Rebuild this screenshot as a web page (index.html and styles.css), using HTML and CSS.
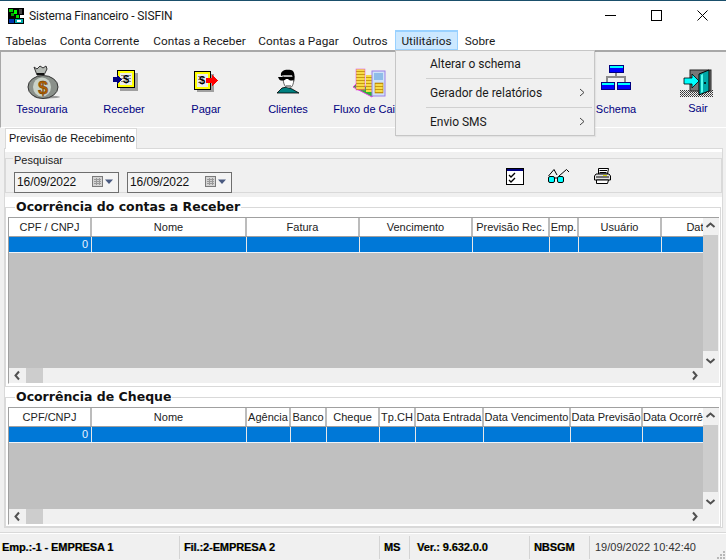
FILE: index.html
```html
<!DOCTYPE html>
<html lang="pt-BR">
<head>
<meta charset="utf-8">
<title>Sistema Financeiro - SISFIN</title>
<link rel="stylesheet" href="styles.css">
</head>
<body>
<div class="app">
  <header class="titlebar">
    <svg class="appicon" width="16" height="16" viewBox="0 0 16 16" shape-rendering="crispEdges"><rect width="16" height="16" fill="#000"/><rect x="1" y="1" width="4" height="3" fill="#0c0"/><rect x="6" y="2" width="3" height="4" fill="#0f0"/><rect x="3" y="5" width="3" height="3" fill="#0a0"/><rect x="11" y="1" width="3" height="5" fill="#444"/><rect x="8" y="7" width="3" height="3" fill="#0d0"/><rect x="1" y="11" width="5" height="4" fill="#03a"/><rect x="7" y="11" width="8" height="4" fill="#0aa"/><rect x="12" y="7" width="4" height="3" fill="#fff"/><rect x="9" y="12" width="4" height="2" fill="#fff"/></svg>
    <span class="title">Sistema Financeiro - SISFIN</span>
    <div class="winctl">
      <svg width="11" height="11" viewBox="0 0 11 11"><path d="M0 5.5H11" stroke="#000"/></svg>
      <svg width="11" height="11" viewBox="0 0 11 11"><rect x=".5" y=".5" width="10" height="10" fill="none" stroke="#000"/></svg>
      <svg width="11" height="11" viewBox="0 0 11 11"><path d="M.5 .5L10.500 10.500M10.500 .5L.5 10.500" stroke="#000"/></svg>
    </div>
  </header>
  <nav class="menubar">
    <span class="menu">Tabelas</span>
    <span class="menu">Conta Corrente</span>
    <span class="menu">Contas a Receber</span>
    <span class="menu">Contas a Pagar</span>
    <span class="menu">Outros</span>
    <span class="menu active">Utilitários</span>
    <span class="menu">Sobre</span>
  </nav>
  <div class="dropdown">
    <div class="dd-item">Alterar o schema</div>
    <div class="dd-sep"></div>
    <div class="dd-item">Gerador de relatórios<svg class="dd-arrow" width="6" height="9" viewBox="0 0 6 9"><path d="M1 1L5 4.500L1 8" fill="none" stroke="#444"/></svg></div>
    <div class="dd-sep"></div>
    <div class="dd-item">Envio SMS<svg class="dd-arrow" width="6" height="9" viewBox="0 0 6 9"><path d="M1 1L5 4.500L1 8" fill="none" stroke="#444"/></svg></div>
  </div>
  <div class="toolbar">
    <div class="tool">
      <svg width="40" height="40" viewBox="0 0 40 40"><ellipse cx="25" cy="37" rx="13" ry="1.500" fill="#9a9a9a"/><path d="M12 7L15 9L18 6L21 8L24 6L25 9L22 15H15Z" fill="#b5bab5" stroke="#333"/><path d="M15 14H22" stroke="#111" stroke-width="2"/><ellipse cx="21" cy="27" rx="15" ry="11.500" fill="#8a908a" stroke="#333"/><ellipse cx="20" cy="27" rx="9" ry="9.500" fill="#c9d2c9"/><text class="dollar-big" x="21" y="34">$</text></svg>
      <span class="tool-label">Tesouraria</span>
    </div>
    <div class="tool">
      <svg width="40" height="40" viewBox="0 0 40 40" shape-rendering="crispEdges"><rect x="16" y="13" width="18" height="18" fill="#a0a0a0"/><rect x="13.500" y="10.500" width="17" height="17" fill="#ff0" stroke="#000"/><rect x="16" y="13" width="12" height="12" fill="#ececec"/><path d="M17 15H20M17 18H20M17 21H20M24 15H27M24 18H27M24 21H27" stroke="#888"/><text class="dollar" x="22" y="23">$</text><path d="M9 17H13V14L18 19.500L13 25V22H9Z" fill="#000080"/></svg>
      <span class="tool-label">Receber</span>
    </div>
    <div class="tool">
      <svg width="40" height="40" viewBox="0 0 40 40" shape-rendering="crispEdges"><rect x="11" y="14" width="17" height="18" fill="#a0a0a0"/><rect x="8.500" y="11.500" width="16" height="18" fill="#ff0" stroke="#000"/><rect x="11" y="14" width="11" height="13" fill="#ececec"/><path d="M12 16H14M12 19H14M12 22H14" stroke="#888"/><text class="dollar" x="16" y="24">$</text><path d="M20 18H26V14L32 20.500L26 27V23H20Z" fill="#f00"/></svg>
      <span class="tool-label">Pagar</span>
    </div>
    <div class="tool">
      <svg width="40" height="40" viewBox="0 0 40 40"><path d="M9 33L14 28L19 27L24 29L31 33Z" fill="#008080" stroke="#000" stroke-width=".8"/><path d="M15 16C15 24 17 28 21 28C25 28 26 22 26 16Z" fill="#fff" stroke="#000" stroke-width=".6"/><path d="M13 16C12 10 18 9 23 10C27 11 27 16 26 22L24 15H16Z" fill="#000"/><path d="M10 17H26V19C25 21 22 21 20 19H18C16 21 12 21 11 19Z" fill="#000"/><path d="M18 26H23" stroke="#000" stroke-width=".8"/></svg>
      <span class="tool-label">Clientes</span>
    </div>
    <div class="tool">
      <svg width="40" height="40" viewBox="0 0 40 40"><defs><pattern id="coins" width="4" height="3" patternUnits="userSpaceOnUse"><rect width="4" height="3" fill="#f6dc4a"/><rect y="2" width="4" height="1" fill="#c89a10"/></pattern></defs><path d="M3 27L9 21L24 33L22 37Z" fill="#2fb52f" stroke="#e040e0"/><rect x="6" y="9" width="9" height="21" fill="url(#coins)" stroke="#e040e0" stroke-width=".5"/><rect x="16" y="15" width="8" height="17" fill="url(#coins)"/><rect x="22" y="11" width="13" height="25" fill="#cfe3f7" stroke="#9a7fe8"/><rect x="24" y="13" width="9" height="7" fill="#8fbce8"/><rect x="25" y="23" width="8" height="10" fill="url(#coins)" stroke="#c08000" stroke-width=".6"/></svg>
      <span class="tool-label">Fluxo de Caixa</span>
    </div>
    <div class="tool"></div>
    <div class="tool"></div>
    <div class="tool">
      <svg width="40" height="40" viewBox="0 0 40 40" shape-rendering="crispEdges"><path d="M20 12V17M11 22V17H29V22" fill="none" stroke="#8c8c8c" stroke-width="2"/><rect x="13.500" y="5.500" width="14" height="7" fill="#00f" stroke="#000080"/><rect x="14" y="6" width="13" height="2" fill="#0ff"/><rect x="5.500" y="22.500" width="13" height="7" fill="#00f" stroke="#000080"/><rect x="6" y="23" width="12" height="2" fill="#0ff"/><rect x="21.500" y="22.500" width="13" height="7" fill="#00f" stroke="#000080"/><rect x="22" y="23" width="12" height="2" fill="#0ff"/></svg>
      <span class="tool-label">Schema</span>
    </div>
    <div class="tool tool-exit">
      <svg width="40" height="40" viewBox="0 0 40 40"><defs><pattern id="dither" width="2" height="2" patternUnits="userSpaceOnUse"><rect width="1" height="1" fill="#333"/><rect x="1" y="1" width="1" height="1" fill="#555"/></pattern></defs><rect x="2" y="30" width="33" height="7" fill="url(#dither)"/><rect x="12" y="10" width="21" height="21" fill="#777" stroke="#222"/><path d="M21 14L31 10V31L21 35Z" fill="#00a8a8" stroke="#000"/><path d="M23 15L25 14V32L23 33Z" fill="#5fe"/><circle cx="27" cy="23" r="1" fill="#000"/><path d="M6 18H14V14L21 21L14 28V24H6Z" fill="#0ff" stroke="#000" stroke-width=".8"/></svg>
      <span class="tool-label">Sair</span>
    </div>
  </div>
  <div class="tabs"><div class="tab">Previsão de Recebimento</div></div>
  <main class="panel">
    <fieldset class="search">
      <legend>Pesquisar</legend>
      <div class="search-row">
        <div class="datebox">16/09/2022
          <svg class="cal" width="22" height="12" viewBox="0 0 22 12" shape-rendering="crispEdges"><rect x=".5" y=".5" width="10" height="10" fill="#d4d4d4" stroke="#7a7a7a"/><path d="M2 3H9M2 5H9M2 7H9M4 2V9M7 2V9" stroke="#999"/><path d="M13 3.500H21L17 8Z" fill="#4a5a80" shape-rendering="auto"/></svg>
        </div>
        <div class="datebox">16/09/2022
          <svg class="cal" width="22" height="12" viewBox="0 0 22 12" shape-rendering="crispEdges"><rect x=".5" y=".5" width="10" height="10" fill="#d4d4d4" stroke="#7a7a7a"/><path d="M2 3H9M2 5H9M2 7H9M4 2V9M7 2V9" stroke="#999"/><path d="M13 3.500H21L17 8Z" fill="#4a5a80" shape-rendering="auto"/></svg>
        </div>
        <div class="actions">
          <svg width="18" height="17" viewBox="0 0 18 17" shape-rendering="crispEdges"><rect x=".5" y=".5" width="17" height="16" fill="#fff" stroke="#000"/><rect x="1" y="1" width="16" height="2" fill="#000080"/><path d="M3 7L5 9L9 5M3 12L5 14L9 10" fill="none" stroke="#000" stroke-width="1.300" shape-rendering="auto"/></svg>
          <svg width="22" height="15" viewBox="0 0 22 15"><path d="M.5 8L6 1.500L9 7M11 8L18.500 1.500L21 4" fill="none" stroke="#000"/><rect x=".5" y="8.500" width="6" height="6" rx="1.500" fill="#0ff" stroke="#000"/><rect x="9.500" y="8.500" width="6" height="6" rx="1.500" fill="#0ff" stroke="#000"/><path d="M6.500 10H9.500" stroke="#000"/></svg>
          <svg width="17" height="16" viewBox="0 0 17 16"><path d="M4.500 .5H14.500L13.500 6H4.500Z" fill="#fff" stroke="#000"/><path d="M5.500 2.500H13M5.500 4.500H12.500" stroke="#000"/><path d="M2 6H15L16.500 8V12H.5V8Z" fill="#e4e4e4" stroke="#000"/><path d="M2 9H15" stroke="#000"/><rect x="9" y="7" width="4" height="1" fill="#dd0"/><path d="M2.500 12H14.500L13.500 15.500H2.500Z" fill="#fff" stroke="#000"/></svg>
        </div>
      </div>
    </fieldset>
    <fieldset class="group group-main">
      <legend>Ocorrência do contas a Receber</legend>
      <div class="dbgrid">
        <div class="table">
          <div class="row head cols-a"><span>CPF / CNPJ</span><span>Nome</span><span>Fatura</span><span>Vencimento</span><span>Previsão Rec.</span><span>Emp.</span><span>Usuário</span><span>Data</span></div>
          <div class="row data cols-a"><span class="num">0</span><span></span><span></span><span></span><span></span><span></span><span></span><span></span></div>
        </div>
        <div class="vscroll">
          <svg class="arrow" width="15" height="15" viewBox="0 0 15 15"><path d="M3.500 9L7.500 5.500L11.500 9" fill="none" stroke="#505050" stroke-width="2"/></svg>
          <div class="vthumb"></div>
          <svg class="arrow" width="15" height="15" viewBox="0 0 15 15"><path d="M3.500 6L7.500 9.500L11.500 6" fill="none" stroke="#505050" stroke-width="2"/></svg>
        </div>
        <div class="hscroll">
          <svg class="arrow" width="17" height="15" viewBox="0 0 17 15"><path d="M10 3.500L6.500 7.500L10 11.500" fill="none" stroke="#505050" stroke-width="2"/></svg>
          <div class="hthumb"></div>
          <svg class="arrow arrow-end" width="17" height="15" viewBox="0 0 17 15"><path d="M7 3.500L10.500 7.500L7 11.500" fill="none" stroke="#505050" stroke-width="2"/></svg>
        </div>
        <div class="corner"></div>
      </div>
    </fieldset>
    <fieldset class="group group-cheque">
      <legend>Ocorrência de Cheque</legend>
      <div class="dbgrid">
        <div class="table">
          <div class="row head cols-b"><span>CPF/CNPJ</span><span>Nome</span><span>Agência</span><span>Banco</span><span>Cheque</span><span>Tp.CH</span><span>Data Entrada</span><span>Data Vencimento</span><span>Data Previsão</span><span>Data Ocorrência</span></div>
          <div class="row data cols-b"><span class="num">0</span><span></span><span></span><span></span><span></span><span></span><span></span><span></span><span></span><span></span></div>
        </div>
        <div class="vscroll">
          <svg class="arrow" width="15" height="15" viewBox="0 0 15 15"><path d="M3.500 9L7.500 5.500L11.500 9" fill="none" stroke="#505050" stroke-width="2"/></svg>
          <div class="vthumb"></div>
          <svg class="arrow" width="15" height="15" viewBox="0 0 15 15"><path d="M3.500 6L7.500 9.500L11.500 6" fill="none" stroke="#505050" stroke-width="2"/></svg>
        </div>
        <div class="hscroll">
          <svg class="arrow" width="17" height="15" viewBox="0 0 17 15"><path d="M10 3.500L6.500 7.500L10 11.500" fill="none" stroke="#505050" stroke-width="2"/></svg>
          <div class="hthumb"></div>
          <svg class="arrow arrow-end" width="17" height="15" viewBox="0 0 17 15"><path d="M7 3.500L10.500 7.500L7 11.500" fill="none" stroke="#505050" stroke-width="2"/></svg>
        </div>
        <div class="corner"></div>
      </div>
    </fieldset>
  </main>
  <footer class="statusbar">
    <div class="st st-emp">Emp.:-1 - EMPRESA 1</div>
    <div class="st st-fil">Fil.:2-EMPRESA 2</div>
    <div class="st st-uf">MS</div>
    <div class="st st-ver">Ver.: 9.632.0.0</div>
    <div class="st st-user">NBSGM</div>
    <div class="st st-date">19/09/2022 10:42:40</div>
    <svg class="grip" width="10" height="10" viewBox="0 0 10 10" shape-rendering="crispEdges"><path d="M7 1h2v2H7zM4 4h2v2H4zM7 4h2v2H7zM1 7h2v2H1zM4 7h2v2H4zM7 7h2v2H7z" fill="#b8b8b8"/></svg>
  </footer>
</div>
</body>
</html>
```
FILE: styles.css
```css
* { box-sizing: border-box; }
html, body { margin: 0; padding: 0; }
body { background: #f0f0f0; font-family: "Liberation Sans", Arial, sans-serif; font-size: 11px; color: #000; }
.app { position: relative; width: 726px; height: 560px; display: flex; flex-direction: column; overflow: hidden; }

.titlebar { flex: none; height: 30px; background: #fff; border-top: 1px solid #1a4f6b; display: flex; align-items: center; padding-left: 8px; }
.appicon { margin-right: 5px; }
.title { font-family: Roboto, sans-serif; font-size: 12px; letter-spacing: -.15px; color: #1a1a1a; }
.winctl { margin-left: auto; display: flex; gap: 35px; padding-right: 18px; align-items: center; }

.menubar { flex: none; height: 20px; background: #fff; display: grid; grid-template-columns: 52px 95px 105px 93px 50px 63px 44px; font-family: Roboto, sans-serif; font-size: 11.800px; color: #1a1a1a; }
.menu { display: flex; align-items: center; justify-content: center; border: 1px solid transparent; border-top-width: 2px; border-bottom-width: 0; white-space: nowrap; }
.menu.active { background: #cce8ff; border: 1px solid #99d1ff; border-top-width: 2px; }

.dropdown { position: absolute; left: 395px; top: 50px; width: 200px; height: 86px; background: #f0f0f0; border: 1px solid #c6c6c6; z-index: 5; font-family: Roboto, sans-serif; font-size: 12px; color: #1a1a1a; display: flex; flex-direction: column; box-shadow: 1px 1px 1px rgba(0,0,0,.05); }
.dd-item { height: 27px; padding-left: 34px; display: flex; align-items: center; position: relative; }
.dd-item:first-child { padding-bottom: 2px; }
.dd-item:nth-child(3) { height: 28px; }
.dd-sep { height: 1px; margin-left: 30px; margin-right: 2px; background: #d0d0d0; flex: none; }
.dd-arrow { position: absolute; right: 9px; top: 9px; }

.toolbar { flex: none; height: 78px; border-top: 2px solid #a8a8a8; border-left: 1px solid #a8a8a8; border-bottom: 1px solid #fff; display: flex; padding-top: 8px; background: #f0f0f0; }
.tool { flex: none; width: 82px; height: 58px; display: flex; flex-direction: column; align-items: center; }
.tool-label { color: #000080; font-size: 11px; line-height: 14px; margin-top: 2px; white-space: nowrap; }
.tool-exit .tool-label { margin-top: 1px; }
.dollar-big { font: bold 18px "Liberation Sans", sans-serif; fill: #b06000; stroke: #603000; stroke-width: .4px; text-anchor: middle; }
.dollar { font: bold 11px "Liberation Sans", sans-serif; fill: #000; text-anchor: middle; }

.tabs { flex: none; height: 20px; display: flex; padding-left: 5px; position: relative; }
.tab { width: 132px; height: 21px; background: #fff; border: 1px solid #d9d9d9; border-bottom: 0; padding-left: 3px; line-height: 18px; font-size: 11px; color: #111; position: relative; z-index: 1; white-space: nowrap; }

.panel { flex: none; height: 380px; margin: 0 3px 0 4px; border: 1px solid #d9d9d9; background: #fff; display: flex; flex-direction: column; }
.search { flex: none; margin: 3px 0 0 0; height: 45px; padding: 0 9px; background: #f0f0f0; border: 0; position: relative; min-inline-size: 0; }
.search legend { font-size: 11px; line-height: 13px; color: #222; position: absolute; left: 8px; top: 2px; background: #f0f0f0; padding: 0 1px; }
.search::before { content: ""; position: absolute; left: 0; right: 0; top: 6px; bottom: 0; border: 1px solid #d9d9d9; }
.search-row { position: relative; display: flex; gap: 8px; padding-top: 20px; }
.datebox { width: 105px; height: 21px; border: 1px solid #6e6e6e; background: #f4f4f4; font-size: 12px; line-height: 19px; padding-left: 2px; color: #111; position: relative; letter-spacing: -.1px; }
.cal { position: absolute; right: 4px; top: 3px; }
.actions { display: flex; align-items: flex-start; gap: 24px; margin-left: 266px; margin-top: -4px; }

.group { flex: none; margin: 0 1px 0 0; padding: 0 1px 0 2px; border: 1px solid #d9d9d9; min-inline-size: 0; background: transparent; }
.group legend { margin-left: 7px; padding: 0 1px; font-family: "DejaVu Sans", sans-serif; font-weight: bold; font-size: 12.500px; line-height: 20px; color: #111; }
.group-main { height: 190px; }
.group-cheque { height: 140px; }

.dbgrid { display: grid; grid-template-columns: 694px 15px; background: #f0f0f0; border-top: 1px solid #a0a0a0; border-left: 1px solid #a0a0a0; border-bottom: 1px solid #fff; }
.group-main .dbgrid { grid-template-rows: 150px 15px; }
.group-cheque .dbgrid { grid-template-rows: 101px 15px; }

.table { background: #c0c0c0; overflow: hidden; }
.row { display: grid; }
.cols-a { grid-template-columns: 83px 155px 113px 113px 77px 29px 83px 74px; width: 727px; }
.cols-b { grid-template-columns: 83px 155px 44px 36px 53px 36px 68px 87px 72px 80px; width: 714px; }
.head { height: 19px; background: #fff; border-bottom: 1px solid #a0a0a0; }
.head span { display: block; border-right: 2px solid #bcbcbc; text-align: center; line-height: 18px; font-size: 11px; color: #222; overflow: hidden; white-space: nowrap; }
.data { height: 16px; background: #0078d7; border-bottom: 1px solid #eef4fa; }
.data span { display: block; border-right: 1px solid #e8e8e8; color: #fff; line-height: 15px; font-size: 11px; }
.data .num { text-align: right; padding-right: 3px; color: #e8f2ff; }

.vscroll { background: #f0f0f0; display: flex; flex-direction: column; align-items: center; }
.vthumb { flex: 1; width: 15px; background: #cdcdcd; margin: 2px 0; }
.hscroll { background: #f0f0f0; display: flex; align-items: center; }
.hthumb { width: 17px; height: 15px; background: #cdcdcd; }
.arrow { flex: none; display: block; }
.arrow-end { margin-left: auto; }
.corner { background: #f0f0f0; }

.statusbar { flex: none; height: 28px; margin-top: auto; border-top: 1px solid #d9d9d9; box-shadow: inset 0 1px 0 #fff; background: #f0f0f0; display: flex; position: relative; padding-top: 3px; font-weight: bold; font-size: 11px; letter-spacing: -.1px; color: #000; text-shadow: -.4px 0 rgba(230,220,0,.6), .4px 0 rgba(0,60,255,.6); }
.st { height: 23px; line-height: 23px; border-right: 1px solid #d4d4d4; white-space: nowrap; padding-left: 2px; flex: none; }
.st-emp { width: 180px; }
.st-fil { width: 200px; padding-left: 4px; }
.st-uf { width: 30px; padding-left: 4px; }
.st-ver { width: 120px; padding-left: 7px; }
.st-user { width: 60px; padding-left: 4px; }
.st-date { border-right: 0; padding-left: 5px; font-weight: normal; letter-spacing: 0; color: #333; text-shadow: none; }
.grip { position: absolute; right: 0; bottom: 0; }
```
